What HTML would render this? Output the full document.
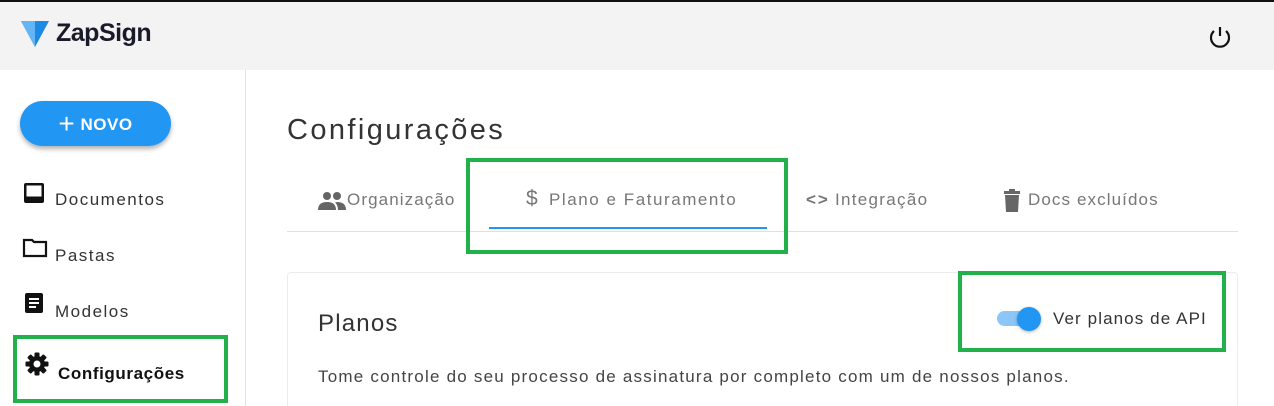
<!DOCTYPE html>
<html><head><meta charset="utf-8"><style>
*{margin:0;padding:0;box-sizing:border-box}
html{width:1274px;height:406px;overflow:hidden}
body{width:1274px;height:406px;overflow:hidden;background:#fff;font-family:"Liberation Sans",sans-serif;position:relative;color:#333}
.hdr{position:absolute;left:0;top:0;width:1274px;height:70px;background:#f3f3f3;border-top:2px solid #111}
.a{position:absolute;white-space:nowrap}
.side{position:absolute;left:245px;top:70px;width:1px;height:336px;background:#e3e3e3}
.nav{position:absolute;left:22px;font-size:17px;color:#333;letter-spacing:1.5px}
.g{position:absolute;border:4px solid #22b04b}
.tab{position:absolute;top:190px;font-size:17px;color:#777;letter-spacing:1.1px;white-space:nowrap}
</style></head><body>
<div class="hdr"></div>
<svg class="a" style="left:20px;top:19px" width="30" height="30" viewBox="0 0 30 30"><path d="M1 2 L29 2 L15 28 Z" fill="#1e88e5"/><path d="M1 2 L15 2 L15 28 Z" fill="#64b5f6"/></svg>
<div class="a" style="left:56px;top:19px;font-size:25px;font-weight:bold;color:#1a1a2a;letter-spacing:-0.5px">ZapSign</div>
<svg class="a" style="left:1207px;top:25px" width="26" height="24" viewBox="0 0 26 24"><path d="M7 6 A9 9 0 1 0 19 6" fill="none" stroke="#111" stroke-width="2.2"/><path d="M13 2 V11" stroke="#111" stroke-width="2.2"/></svg>
<div class="side"></div>
<div class="a" style="left:20px;top:101px;width:151px;height:45px;border-radius:23px;background:#2196f3;box-shadow:0 3px 5px rgba(0,0,0,.3);color:#fff;font-weight:bold;font-size:17px;line-height:45px;text-align:center;letter-spacing:0.5px"><span style="font-size:28px;font-weight:normal;vertical-align:-3px">+</span> NOVO</div>
<svg class="a" style="left:22px;top:181px" width="24" height="24" viewBox="0 0 24 24"><rect x="2" y="2" width="20" height="20" rx="2" fill="#111"/><rect x="4.5" y="4.5" width="15" height="11" fill="#fff"/></svg>
<div class="nav" style="left:55px;top:190px">Documentos</div>
<svg class="a" style="left:22px;top:237px" width="26" height="22" viewBox="0 0 26 22"><path d="M2 3 H10 L12 5 H24 V19 H2 Z" fill="none" stroke="#111" stroke-width="2.2"/></svg>
<div class="nav" style="left:55px;top:246px">Pastas</div>
<svg class="a" style="left:22px;top:291px" width="24" height="24" viewBox="0 0 24 24"><rect x="3" y="2" width="18" height="20" rx="2" fill="#111"/><path d="M7 8H17M7 12H17M7 16H14" stroke="#fff" stroke-width="2"/></svg>
<div class="nav" style="left:55px;top:302px">Modelos</div>
<svg class="a" style="left:25px;top:352px" width="24" height="24" viewBox="0 0 24 24"><g fill="#111"><circle cx="12" cy="12" r="8"/><rect x="9.5" y="0.5" width="5" height="23" rx="1"/><rect x="9.5" y="0.5" width="5" height="23" rx="1" transform="rotate(45 12 12)"/><rect x="9.5" y="0.5" width="5" height="23" rx="1" transform="rotate(90 12 12)"/><rect x="9.5" y="0.5" width="5" height="23" rx="1" transform="rotate(135 12 12)"/></g><circle cx="12" cy="12" r="3.5" fill="#fff"/></svg>
<div class="nav" style="left:58px;top:364px;font-weight:bold;color:#111;letter-spacing:0.6px">Configurações</div>
<div class="g" style="left:13px;top:335px;width:215px;height:68px"></div>
<div class="a" style="left:287px;top:114px;font-size:29px;color:#333;letter-spacing:2.4px">Configurações</div>
<svg class="a" style="left:317px;top:191px" width="30" height="20" viewBox="0 0 30 20"><circle cx="10" cy="5" r="4" fill="#666"/><circle cx="20" cy="5" r="4" fill="#666"/><path d="M1 19 Q1 11 10 11 Q19 11 19 19Z M20 11 Q29 11 29 19 H21 Q21 14 18 11.5Z" fill="#666"/></svg>
<div class="tab" style="left:347px">Organização</div>
<div class="tab" style="left:526px;font-size:21px;top:187px">$</div>
<div class="tab" style="left:549px;letter-spacing:1.55px">Plano e Faturamento</div>
<div class="a" style="left:489px;top:227px;width:278px;height:2px;background:#2196f3"></div>
<div class="tab" style="left:806px;font-weight:bold;letter-spacing:2px">&lt;&gt;</div>
<div class="tab" style="left:835px;letter-spacing:1.3px">Integração</div>
<svg class="a" style="left:1003px;top:189px" width="18" height="24" viewBox="0 0 18 24"><rect x="1" y="2" width="16" height="3" fill="#666"/><rect x="6" y="0" width="6" height="3" fill="#666"/><path d="M2 6 H16 L15 23 H3Z" fill="#666"/></svg>
<div class="tab" style="left:1028px;letter-spacing:1.1px">Docs excluídos</div>
<div class="a" style="left:287px;top:231px;width:951px;height:1px;background:#e0e0e0"></div>
<div class="g" style="left:466px;top:158px;width:322px;height:96px"></div>
<div class="a" style="left:287px;top:272px;width:951px;height:134px;border:1px solid #ececec;border-bottom:none;border-radius:4px 4px 0 0"></div>
<div class="a" style="left:318px;top:310px;font-size:24px;color:#333;letter-spacing:1.2px">Planos</div>
<div class="a" style="left:318px;top:367px;font-size:17px;color:#444;letter-spacing:1.22px">Tome controle do seu processo de assinatura por completo com um de nossos planos.</div>
<div class="a" style="left:997px;top:311px;width:36px;height:15px;border-radius:8px;background:#8cc6f7"></div>
<div class="a" style="left:1017px;top:307px;width:24px;height:24px;border-radius:50%;background:#2196f3;box-shadow:0 1px 3px rgba(0,0,0,.3)"></div>
<div class="a" style="left:1053px;top:309px;font-size:17px;color:#333;letter-spacing:1.1px">Ver planos de API</div>
<div class="g" style="left:958px;top:271px;width:268px;height:81px"></div>
</body></html>
